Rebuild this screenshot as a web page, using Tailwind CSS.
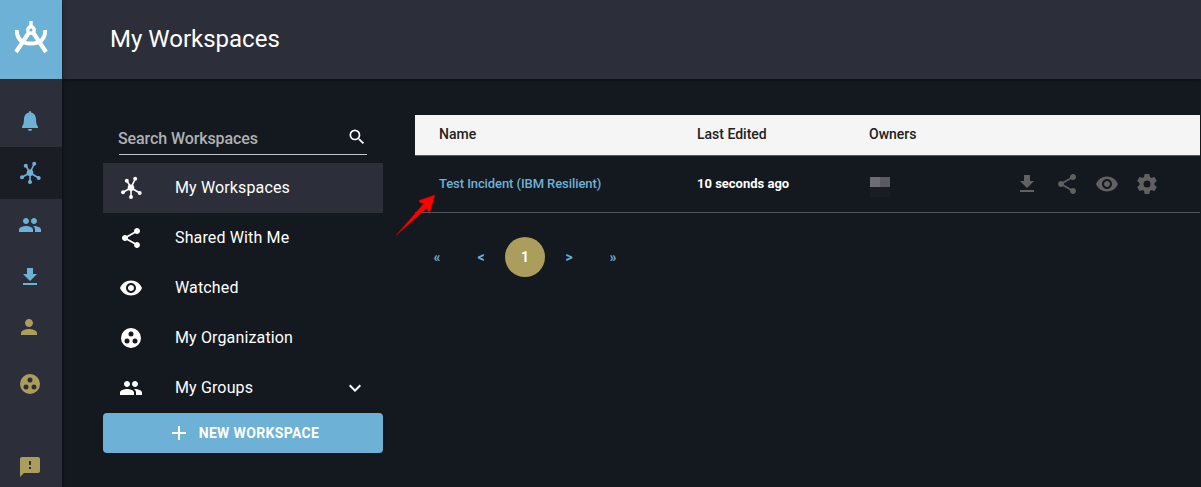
<!DOCTYPE html>
<html lang="en">
<head>
<meta charset="utf-8">
<title>My Workspaces</title>
<script src="https://cdn.jsdelivr.net/npm/@tailwindcss/browser@4"></script>
</head>
<body class="relative h-[487px] w-[1201px] overflow-hidden bg-[#141920] font-['Roboto',sans-serif] text-white">
<svg class="hidden">
  <symbol id="hub" viewBox="0 0 24 24"><g fill="none" stroke="currentColor" stroke-width="1.6"><path d="M12 11.7 8 5M12 11.7 16.2 3M12 11.7V21M12 11.7 4 16.3M12 11.7 20.7 17"/></g><circle cx="12" cy="11.7" r="3.3"/><circle cx="7.8" cy="4.700" r="2"/><circle cx="16.200" cy="2.700" r="2"/><circle cx="12" cy="21" r="2"/><circle cx="4" cy="16.300" r="2"/><circle cx="20.700" cy="17" r="2"/></symbol>
  <symbol id="group" viewBox="0 0 24 24"><path d="M16 11c1.66 0 2.99-1.34 2.99-3S17.66 5 16 5s-3 1.34-3 3 1.34 3 3 3zm-8 0c1.66 0 2.99-1.34 2.99-3S9.66 5 8 5 5 6.34 5 8s1.34 3 3 3zm0 2c-2.33 0-7 1.17-7 3.5V19h14v-2.500C15 14.170 10.330 13 8 13zm8 0c-.29 0-.62.02-.97.05 1.160.84 1.970 1.970 1.970 3.450V19h6v-2.500c0-2.330-4.670-3.500-7-3.500z"/></symbol>
  <symbol id="download" viewBox="0 0 24 24"><path d="M19 9h-4V3H9v6H5l7 7 7-7zM5 18v2h14v-2H5z"/></symbol>
  <symbol id="share" viewBox="0 0 24 24"><path d="M18 16.080c-.76 0-1.440.3-1.960.77L8.910 12.700c.05-.23.09-.46.09-.7s-.04-.47-.09-.7l7.050-4.110c.54.5 1.250.81 2.040.81 1.660 0 3-1.340 3-3s-1.340-3-3-3-3 1.340-3 3c0 .24.04.47.09.7L8.040 9.810C7.500 9.310 6.790 9 6 9c-1.660 0-3 1.340-3 3s1.340 3 3 3c.79 0 1.500-.31 2.040-.81l7.120 4.160c-.05.21-.08.43-.08.65 0 1.610 1.310 2.920 2.920 2.920s2.920-1.310 2.920-2.920-1.310-2.920-2.920-2.920z"/></symbol>
  <symbol id="eye" viewBox="0 0 24 24"><path d="M12 4.500C7 4.500 2.730 7.610 1 12c1.730 4.390 6 7.500 11 7.500s9.270-3.110 11-7.500c-1.730-4.390-6-7.500-11-7.500zM12 17c-2.760 0-5-2.240-5-5s2.240-5 5-5 5 2.240 5 5-2.240 5-5 5zm0-8c-1.660 0-3 1.340-3 3s1.340 3 3 3 3-1.340 3-3-1.340-3-3-3z"/></symbol>
  <symbol id="org" viewBox="0 0 24 24"><path fill-rule="evenodd" d="M12 2a10 10 0 1 0 0 20 10 10 0 0 0 0-20zM8 17.500a2.500 2.500 0 1 1 0-5 2.500 2.500 0 0 1 0 5zM9.500 8a2.500 2.500 0 1 1 5 0 2.500 2.500 0 0 1-5 0zm6.500 9.500a2.500 2.500 0 1 1 0-5 2.500 2.500 0 0 1 0 5z"/></symbol>
  <symbol id="person" viewBox="0 0 24 24"><path d="M12 12c2.210 0 4-1.790 4-4s-1.790-4-4-4-4 1.790-4 4 1.790 4 4 4zm0 2c-2.670 0-8 1.340-8 4v2h16v-2c0-2.660-5.330-4-8-4z"/></symbol>
  <symbol id="feedback" viewBox="0 0 24 24"><path d="M20 2H4c-1.100 0-1.990.9-1.990 2L2 22l4-4h14c1.100 0 2-.9 2-2V4c0-1.100-.9-2-2-2zm-7 12h-2v-2h2v2zm0-4h-2V6h2v4z"/></symbol>
  <symbol id="cog" viewBox="0 0 24 24"><path d="M12 15.500A3.500 3.500 0 0 1 8.500 12 3.500 3.500 0 0 1 12 8.500a3.500 3.500 0 0 1 3.500 3.500 3.500 3.500 0 0 1-3.500 3.500m7.430-2.530c.04-.32.07-.64.07-.97s-.03-.66-.07-1l2.110-1.630c.19-.15.24-.42.12-.64l-2-3.460c-.12-.22-.39-.31-.61-.22l-2.490 1c-.52-.39-1.060-.73-1.690-.98l-.37-2.650A.506.506 0 0 0 14 2h-4c-.25 0-.46.18-.5.42l-.37 2.650c-.63.25-1.170.59-1.690.98l-2.490-1c-.22-.09-.49 0-.61.22l-2 3.460c-.13.22-.07.49.12.64L4.570 11c-.04.34-.07.67-.07 1s.03.65.07.97l-2.110 1.660c-.19.15-.25.42-.12.64l2 3.460c.12.22.39.3.61.22l2.490-1.010c.52.4 1.060.74 1.690.99l.37 2.650c.04.24.25.42.5.42h4c.25 0 .46-.18.5-.42l.37-2.650c.63-.26 1.170-.59 1.690-.99l2.490 1.010c.22.08.49 0 .61-.22l2-3.460c.12-.22.07-.49-.12-.64z"/></symbol>
</svg>
<div class="flex h-full">
  <nav class="z-10 flex w-[62px] shrink-0 flex-col bg-[#2c2f3a] fill-current text-[#6eb1d6] shadow-[0_0_4px_rgba(0,0,0,0.6)]">
    <div class="h-[79px] bg-[#6eb1d6] text-white">
      <svg class="ml-2 mt-3.5 block size-[46px] fill-none stroke-current" viewBox="0 0 46 46"><circle cx="23" cy="16" r="3.200" stroke-width="3.400"/><path d="M23 7v6" stroke-width="3.400"/><path d="M21 18.500 8 38M25 18.500 38 38" stroke-width="4.200"/><path d="M8.800 16C8.800 25 14 29.500 23 29.500S37.200 25 37.200 16" stroke-width="3.800"/></svg>
    </div>
    <div class="flex h-[68px] items-end pb-3.5 pl-[18px]"><svg class="size-6" viewBox="0 0 24 24"><path d="M12 2a1 1 0 0 1 1 1v.6c3 .6 4.800 3 5 6 .2 4 .2 6.200 2 8V19H4v-1.400c1.800-1.800 1.800-4 2-8 .2-3 2-5.400 5-6V3a1 1 0 0 1 1-1zM10 20h4a2 2 0 0 1-4 0z"/></svg></div>
    <div class="flex h-[52px] items-center bg-[#1b1d24] pl-[18px]"><svg class="size-6"><use href="#hub"/></svg></div>
    <div class="flex h-[52px] items-center pl-[18px]"><svg class="size-6"><use href="#group"/></svg></div>
    <div class="flex h-[52px] items-center pl-[18px]"><svg class="size-6"><use href="#download"/></svg></div>
    <div class="flex h-12 items-center pl-[17px] text-[#ab9d5b]"><svg class="size-6"><use href="#person"/></svg></div>
    <div class="flex h-[66px] items-center pl-[18px] text-[#ab9d5b]"><svg class="size-6"><use href="#org"/></svg></div>
    <div class="mt-[38px] pl-[18px] text-[#ab9d5b]"><svg class="size-6"><use href="#feedback"/></svg></div>
  </nav>
  <div class="flex min-w-0 flex-1 flex-col">
    <header class="flex h-[79px] shrink-0 items-center bg-[#2c2f3a] pb-0.5 pl-12 shadow-[0_0_4px_rgba(0,0,0,0.6)]"><h1 class="text-[24px] leading-8">My Workspaces</h1></header>
    <main class="flex flex-1">
      <aside class="ml-[41px] mt-11 w-[280px] shrink-0">
        <div class="ml-4 flex h-8 w-[248px] items-center justify-between border-b border-[#c4c5c7]">
          <span class="-ml-px text-[16px] font-medium tracking-[-0.1px] text-[#b0b1b2]">Search Workspaces</span>
          <svg class="mb-1 size-5 fill-white" viewBox="0 0 24 24"><path d="M15.500 14h-.79l-.28-.27A6.471 6.471 0 0 0 16 9.500 6.500 6.500 0 1 0 9.500 16c1.610 0 3.090-.59 4.230-1.570l.27.28v.79l5 4.990L20.490 19l-4.990-5zm-6 0C7.010 14 5 11.990 5 9.500S7.010 5 9.500 5 14 7.010 14 9.500 11.990 14 9.500 14z"/></svg>
        </div>
        <ul class="mt-2 fill-current text-[16px] tracking-[0.14px]">
          <li class="flex h-[50px] items-center gap-8 bg-[#2c2f3a] pl-4"><svg class="size-6"><use href="#hub"/></svg>My Workspaces</li>
          <li class="flex h-[50px] items-center gap-8 pl-4"><svg class="size-6"><use href="#share"/></svg>Shared With Me</li>
          <li class="flex h-[50px] items-center gap-8 pl-4"><svg class="size-6"><use href="#eye"/></svg>Watched</li>
          <li class="flex h-[50px] items-center gap-8 pl-4"><svg class="size-6"><use href="#org"/></svg>My Organization</li>
          <li class="flex h-[50px] items-center gap-8 pl-4"><svg class="size-6"><use href="#group"/></svg><span class="flex-1">My Groups</span><svg class="mr-4 size-6" viewBox="0 0 24 24"><path d="M7.410 8.590 12 13.170l4.590-4.580L18 10l-6 6-6-6z"/></svg></li>
        </ul>
        <button class="flex h-10 w-full items-center justify-center gap-2 rounded bg-[#6eb1d6] text-[14px] font-bold tracking-[0.35px] shadow"><svg class="size-6 fill-current" viewBox="0 0 24 24"><path d="M19 13h-6v6h-2v-6H5v-2h6V5h2v6h6z"/></svg>NEW WORKSPACE</button>
      </aside>
      <section class="ml-8 mt-9 w-[785px]">
        <div class="grid h-[41px] grid-cols-[258px_172px_1fr] items-center border-b border-[#55575b] bg-[#f5f5f5] pl-6 pb-0.5 text-[14px] font-medium text-[#212121]"><span>Name</span><span>Last Edited</span><span>Owners</span></div>
        <div class="grid h-[57px] grid-cols-[258px_172px_146px_1fr] items-center border-b border-[#55575b] pl-6 text-[13px]">
          <a class="font-medium tracking-[-0.08px] text-[#6eb1d6]">Test Incident (IBM Resilient)</a>
          <span class="font-bold">10 seconds ago</span>
          <span class="mt-[5px] grid h-5 w-[21px] grid-cols-[1px_10px_10px] grid-rows-[10px_10px]"><i></i><i class="bg-[#6c6e73]"></i><i class="bg-[#595b60]"></i><i></i><i class="bg-[#1a1e22]"></i><i class="bg-[#191c23]"></i></span>
          <span class="flex gap-4 fill-current text-[#616161]"><svg class="size-6"><use href="#download"/></svg><svg class="size-6"><use href="#share"/></svg><svg class="size-6"><use href="#eye"/></svg><svg class="size-6"><use href="#cog"/></svg></span>
        </div>
        <div class="ml-0.5 mt-6 flex gap-1 text-center text-[14px] leading-10 font-bold text-[#6eb1d6] *:w-10"><span>«</span><span>&lt;</span><span class="rounded-full bg-[#ab9d5b] text-white">1</span><span>&gt;</span><span>»</span></div>
      </section>
    </main>
  </div>
</div>
<svg class="absolute left-[392px] top-[190px] h-[50px] w-[50px]" viewBox="0 0 50 50"><path fill="#fb0300" stroke="#c80000" stroke-width=".5" d="M43 5 27 10.500l1.500 2.500 3.500.3L4 45.500l30.500-27 1.500 3 2 .2z"/></svg>
</body>
</html>
